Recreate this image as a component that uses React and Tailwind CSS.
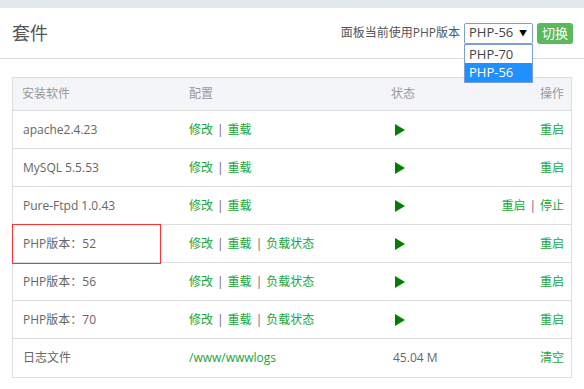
import React from "react";

const font = { fontFamily: '"Open Sans","Noto Sans CJK SC",sans-serif' };

function Play() {
  return (
    <svg width="10" height="12" viewBox="0 0 10 12" className="block">
      <polygon points="0,0 10,6 0,12" fill="#008000" />
    </svg>
  );
}

const Sep = () => <span className="mx-[4px] text-[#6b5b7b]">|</span>;
const L = ({ children }) => <span className="text-[#20a53a]">{children}</span>;

const rows = [
  { name: "apache2.4.23", cfg: ["修改", "重载"], state: "play", ops: ["重启"] },
  { name: "MySQL 5.5.53", cfg: ["修改", "重载"], state: "play", ops: ["重启"] },
  { name: "Pure-Ftpd 1.0.43", cfg: ["修改", "重载"], state: "play", ops: ["重启", "停止"] },
  { name: "PHP版本：52", cfg: ["修改", "重载", "负载状态"], state: "play", ops: ["重启"], mark: true },
  { name: "PHP版本：56", cfg: ["修改", "重载", "负载状态"], state: "play", ops: ["重启"] },
  { name: "PHP版本：70", cfg: ["修改", "重载", "负载状态"], state: "play", ops: ["重启"] },
  { name: "日志文件", cfg: ["/www/wwwlogs"], state: "45.04 M", ops: ["清空"] },
];

function Links({ items }) {
  return (
    <>
      {items.map((t, i) => (
        <React.Fragment key={i}>
          {i > 0 && <Sep />}
          <L>{t}</L>
        </React.Fragment>
      ))}
    </>
  );
}

export default function App() {
  return (
    <div className="w-[584px] h-[389px] bg-white overflow-hidden text-[12px] text-[#666]" style={font}>
      <div className="h-[8px] bg-[#e4e7ec]" />
      <div className="h-[51px] border-b border-[#ddd] flex items-center justify-between pl-[12px] pr-[11px]">
        <div className="text-[18px] text-[#555] leading-none">套件</div>
        <div className="flex items-center">
          <span className="text-[12px] text-[#555] mr-[4px]">面板当前使用PHP版本</span>
          <div className="relative">
            <div className="w-[69px] h-[21px] border border-[#7b9ed6] rounded-[2px] flex items-center justify-between pl-[4px] pr-[5px] text-[13px] text-[#444]">
              <span>PHP-56</span>
              <span className="text-[8px] text-black">▼</span>
            </div>
            <div className="absolute left-0 top-[21px] w-[69px] border border-[#7b9ed6] bg-white text-[13px] z-10">
              <div className="h-[18px] leading-[18px] pl-[4px] text-[#444]">PHP-70</div>
              <div className="h-[19px] leading-[19px] pl-[4px] text-white bg-[#1e90ff]">PHP-56</div>
            </div>
          </div>
          <button className="ml-[4px] w-[36px] h-[21px] bg-[#5cb85c] text-white text-[13px] rounded-[3px] leading-none">切换</button>
        </div>
      </div>
      <div className="mt-[18px] mx-[12px] border border-[#ddd]">
        <div className="h-[33px] bg-[#f4f5f9] flex items-center text-[#999] border-b border-[#ddd]">
          <div className="w-[166px] pl-[9px]">安装软件</div>
          <div className="w-[202px] pl-[10px]">配置</div>
          <div className="w-[110px] pl-[10px]">状态</div>
          <div className="flex-1 text-right pr-[7px] whitespace-nowrap">操作</div>
        </div>
        {rows.map((r, i) => (
          <div key={i} className={`h-[38px] flex items-center ${i < rows.length - 1 ? "border-b border-[#ddd]" : ""}`}>
            <div className="w-[166px] pl-[10px] relative h-full flex items-center">
              {r.name}
              {r.mark && <div className="absolute left-[-1px] top-[-1px] w-[149px] h-[40px] border border-[#f33]" />}
            </div>
            <div className="w-[202px] pl-[10px] whitespace-nowrap">
              <Links items={r.cfg} />
            </div>
            <div className="w-[110px] pl-[14px]">
              {r.state === "play" ? <Play /> : <span className="-ml-[2px]">{r.state}</span>}
            </div>
            <div className="flex-1 text-right pr-[7px] whitespace-nowrap">
              <Links items={r.ops} />
            </div>
          </div>
        ))}
      </div>
    </div>
  );
}
